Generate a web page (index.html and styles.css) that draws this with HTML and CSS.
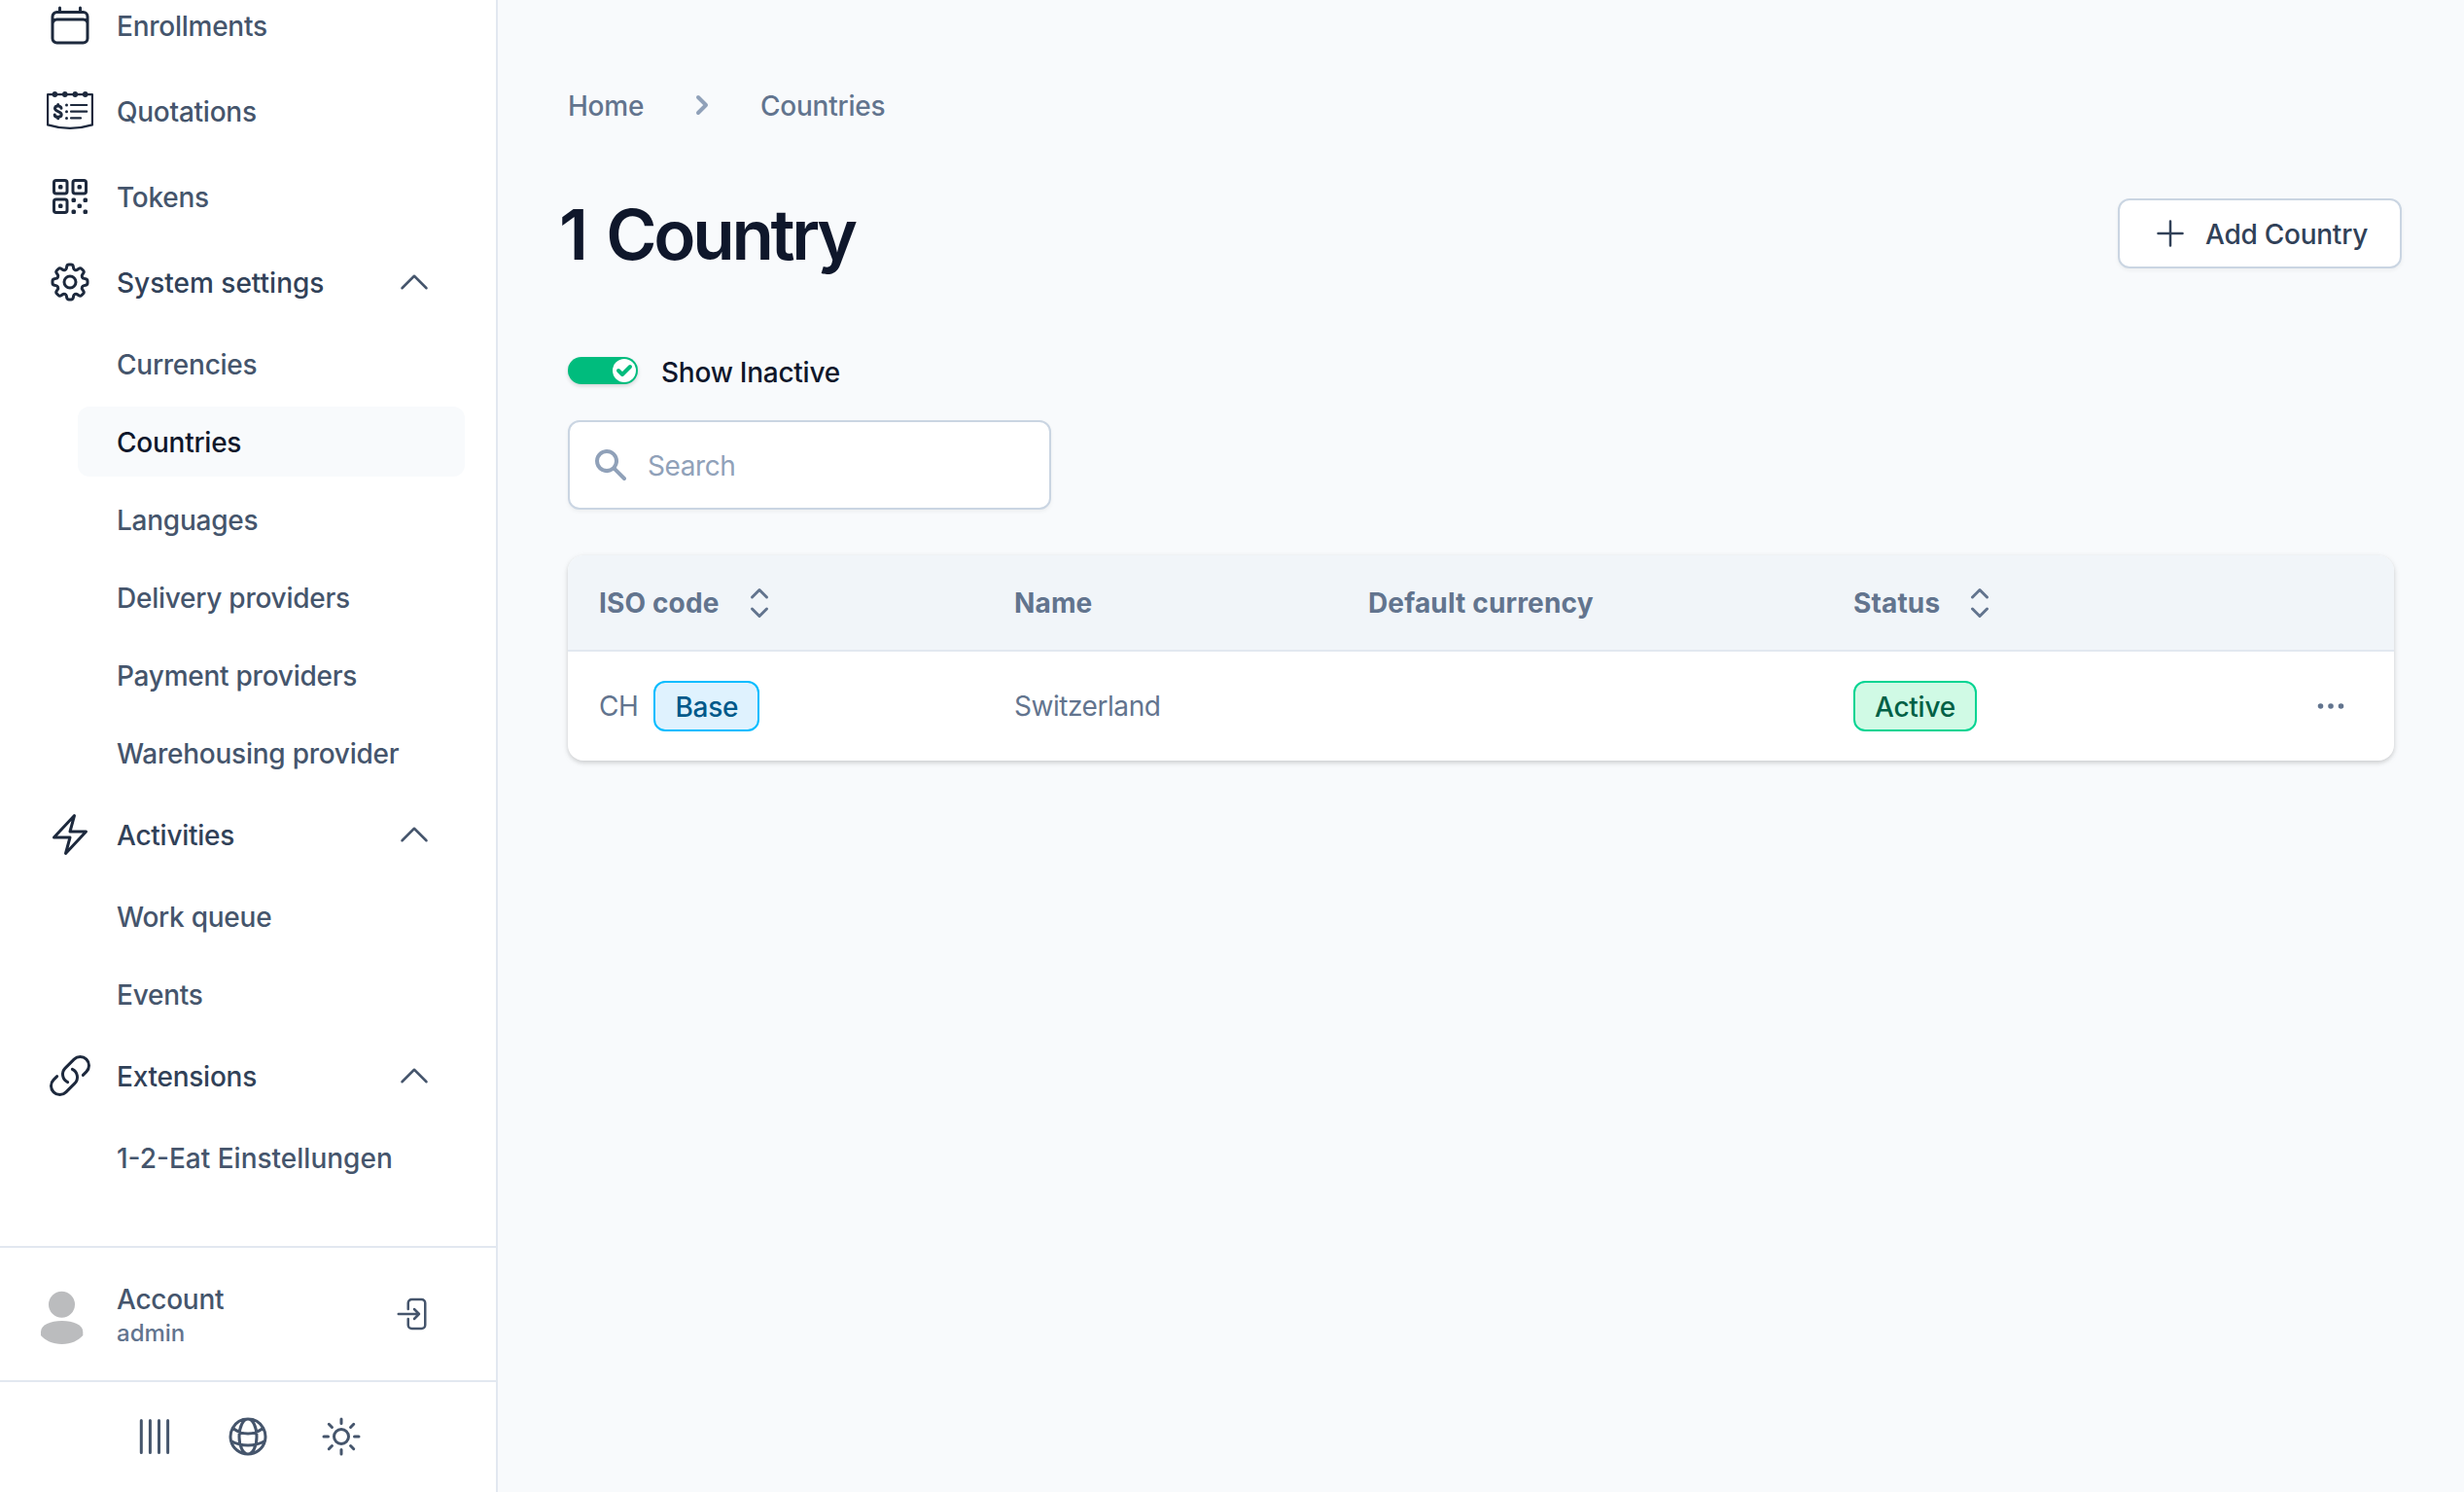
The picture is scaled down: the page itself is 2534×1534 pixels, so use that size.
FILE: index.html
```html
<!DOCTYPE html>
<html lang="en">
<head>
<meta charset="utf-8">
<title>Countries</title>
<link rel="stylesheet" href="styles.css">
</head>
<body>
<svg class="sprite" aria-hidden="true">
  <symbol id="chevron-up" viewBox="0 0 24 24"><path d="m4.5 15.75 7.5-7.5 7.5 7.5"/></symbol>
  <symbol id="sort" viewBox="0 0 24 24"><path d="M8.25 15 12 18.75 15.75 15m-7.5-6L12 5.25 15.75 9"/></symbol>
</svg>
<div class="app">
  <aside class="sidebar">
    <nav class="nav">
      <a class="item"><svg class="icon" viewBox="0 0 24 24"><path d="M6.75 3v2.25M17.25 3v2.25M3 18.75V7.5a2.25 2.25 0 0 1 2.25-2.25h13.5A2.25 2.25 0 0 1 21 7.5v11.25m-18 0A2.25 2.25 0 0 0 5.25 21h13.5A2.25 2.25 0 0 0 21 18.75m-18 0v-7.5A2.25 2.25 0 0 1 5.25 9h13.5A2.25 2.25 0 0 1 21 11.25v7.5"/></svg><span class="label">Enrollments</span></a>
      <a class="item"><svg class="icon icon-note" viewBox="0 0 48 48"><path d="M1.100 7.100h45.800V38.400Q24 45.400 1.100 38.400Z"/><g class="solid"><ellipse cx="8.400" cy="7" rx="2.800" ry="3"/><ellipse cx="18.800" cy="7" rx="2.800" ry="3"/><ellipse cx="29.300" cy="7" rx="2.800" ry="3"/><ellipse cx="39.700" cy="7" rx="2.800" ry="3"/><circle cx="20.500" cy="18" r="1.500"/><circle cx="20.500" cy="24.700" r="1.500"/><circle cx="20.500" cy="31.400" r="1.500"/></g><path d="M25 18h16.200M25 24.700h16.200M25 31.400h10"/><path class="dollar" d="M15 21.300c-.6-3.200-6.500-3.200-6.500.3 0 3.500 6.700 2.400 6.700 6.100 0 3.500-6.700 3.500-7 .3M11.700 17.500v1.200M11.700 30.400v1.300"/></svg><span class="label">Quotations</span></a>
      <a class="item"><svg class="icon" viewBox="0 0 24 24"><path d="M3.75 4.875c0-.621.504-1.125 1.125-1.125h4.5c.621 0 1.125.504 1.125 1.125v4.5c0 .621-.504 1.125-1.125 1.125h-4.5A1.125 1.125 0 0 1 3.75 9.375v-4.5ZM3.75 14.625c0-.621.504-1.125 1.125-1.125h4.5c.621 0 1.125.504 1.125 1.125v4.5c0 .621-.504 1.125-1.125 1.125h-4.5a1.125 1.125 0 0 1-1.125-1.125v-4.5ZM13.5 4.875c0-.621.504-1.125 1.125-1.125h4.5c.621 0 1.125.504 1.125 1.125v4.5c0 .621-.504 1.125-1.125 1.125h-4.5A1.125 1.125 0 0 1 13.5 9.375v-4.5Z"/><path d="M6.75 6.75h.75v.75h-.75v-.75ZM6.75 16.5h.75v.75h-.75v-.75ZM16.5 6.75h.75v.75h-.75v-.75ZM13.5 13.5h.75v.75h-.75v-.75ZM13.5 19.5h.75v.75h-.75v-.75ZM19.5 13.5h.75v.75h-.75v-.75ZM19.5 19.5h.75v.75h-.75v-.75ZM16.5 16.5h.75v.75h-.75v-.75Z"/></svg><span class="label">Tokens</span></a>
      <a class="item parent wide"><svg class="icon" viewBox="0 0 24 24"><path d="M10.343 3.94c.09-.542.56-.94 1.11-.94h1.093c.55 0 1.02.398 1.11.94l.149.894c.07.424.384.764.78.93.398.164.855.142 1.205-.108l.737-.527a1.125 1.125 0 0 1 1.45.12l.773.774c.39.389.44 1.002.12 1.45l-.527.737c-.25.35-.272.806-.107 1.204.165.397.505.71.93.78l.893.15c.543.09.94.559.94 1.109v1.094c0 .55-.397 1.02-.94 1.11l-.894.149c-.424.07-.764.383-.929.78-.165.398-.143.854.107 1.204l.527.738c.32.447.269 1.06-.12 1.45l-.774.773a1.125 1.125 0 0 1-1.449.12l-.738-.527c-.35-.25-.806-.272-1.203-.107-.398.165-.71.505-.781.929l-.149.894c-.09.542-.56.94-1.11.94h-1.094c-.55 0-1.019-.398-1.11-.94l-.148-.894c-.071-.424-.384-.764-.781-.93-.398-.164-.854-.142-1.204.108l-.738.527c-.447.32-1.06.269-1.45-.12l-.773-.774a1.125 1.125 0 0 1-.12-1.45l.527-.737c.25-.35.272-.806.108-1.204-.165-.397-.506-.71-.93-.78l-.894-.15c-.542-.09-.94-.56-.94-1.109v-1.094c0-.55.398-1.02.94-1.11l.894-.149c.424-.07.765-.383.93-.78.165-.398.143-.854-.108-1.204l-.526-.738a1.125 1.125 0 0 1 .12-1.45l.773-.773a1.125 1.125 0 0 1 1.45-.12l.737.527c.35.25.807.272 1.204.107.397-.165.71-.505.78-.929l.15-.894Z"/><path d="M15 12a3 3 0 1 1-6 0 3 3 0 0 1 6 0Z"/></svg><span class="label">System settings</span><svg class="icon chevron"><use href="#chevron-up"/></svg></a>
      <a class="sub">Currencies</a>
      <a class="sub active">Countries</a>
      <a class="sub">Languages</a>
      <a class="sub">Delivery providers</a>
      <a class="sub">Payment providers</a>
      <a class="sub">Warehousing provider</a>
      <a class="item parent"><svg class="icon" viewBox="0 0 24 24"><path d="m3.75 13.5 10.5-11.25L12 10.5h8.25L9.75 21.75 12 13.5H3.75Z"/></svg><span class="label">Activities</span><svg class="icon chevron"><use href="#chevron-up"/></svg></a>
      <a class="sub">Work queue</a>
      <a class="sub">Events</a>
      <a class="item parent"><svg class="icon" viewBox="0 0 24 24"><path d="M13.19 8.688a4.5 4.5 0 0 1 1.242 7.244l-4.5 4.5a4.5 4.5 0 0 1-6.364-6.364l1.757-1.757m13.35-.622 1.757-1.757a4.5 4.5 0 0 0-6.364-6.364l-4.5 4.5a4.5 4.5 0 0 0 1.242 7.244"/></svg><span class="label">Extensions</span><svg class="icon chevron"><use href="#chevron-up"/></svg></a>
      <a class="sub wide">1-2-Eat Einstellungen</a>
    </nav>
    <div class="account">
      <svg class="avatar" viewBox="0 0 48 60"><circle cx="23.5" cy="16.3" r="13.5"/><path d="M2 44.500C2 37 12 33 23.700 33S45.300 37 45.300 44.500V48C41 53 33 57 23.700 57S6 53 2 48Z"/></svg>
      <div class="who"><span class="name">Account</span><span class="role">admin</span></div>
      <svg class="icon logout" viewBox="0 0 24 24"><path d="M8.250 9V5.250A2.250 2.250 0 0 1 10.500 3h6a2.250 2.250 0 0 1 2.250 2.250v13.500A2.250 2.250 0 0 1 16.500 21h-6a2.250 2.250 0 0 1-2.250-2.250V15M12 9l3 3m0 0-3 3m3-3H2.250"/></svg>
    </div>
    <div class="tools">
      <svg class="icon icon-bars" viewBox="0 0 48 48"><path d="M10.300 7.500v33M19.400 7.500v33M28.500 7.500v33M37.600 7.500v33"/></svg>
      <svg class="icon" viewBox="0 0 24 24"><path d="M12 21a9.004 9.004 0 0 0 8.716-6.747M12 21a9.004 9.004 0 0 1-8.716-6.747M12 21c2.485 0 4.500-4.030 4.500-9S14.485 3 12 3m0 18c-2.485 0-4.500-4.030-4.500-9S9.515 3 12 3m0 0a8.997 8.997 0 0 1 7.843 4.582M12 3a8.997 8.997 0 0 0-7.843 4.582m15.686 0A11.953 11.953 0 0 1 12 10.500c-2.998 0-5.740-1.100-7.843-2.918m15.686 0A8.959 8.959 0 0 1 21 12c0 .778-.099 1.533-.284 2.253m0 0A17.919 17.919 0 0 1 12 16.500c-3.162 0-6.133-.815-8.716-2.247m0 0A9.015 9.015 0 0 1 3 12c0-1.605.42-3.113 1.157-4.418"/></svg>
      <svg class="icon" viewBox="0 0 24 24"><path d="M12 3v2.250m6.364.386-1.591 1.591M21 12h-2.250m-.386 6.364-1.591-1.591M12 18.750V21m-4.773-4.227-1.591 1.591M5.250 12H3m4.227-4.773L5.636 5.636M15.750 12a3.750 3.750 0 1 1-7.500 0 3.750 3.750 0 0 1 7.500 0Z"/></svg>
    </div>
  </aside>
  <main class="main">
    <div class="crumbs">
      <a>Home</a>
      <svg class="crumb-sep" viewBox="0 0 20 20"><path d="M7.293 14.707a1 1 0 010-1.414L10.586 10 7.293 6.707a1 1 0 011.414-1.414l4 4a1 1 0 010 1.414l-4 4a1 1 0 01-1.414 0z"/></svg>
      <a>Countries</a>
    </div>
    <header class="head">
      <h1 class="title">1 Country</h1>
      <button class="add"><svg class="icon" viewBox="0 0 24 24"><path d="M12 4.500v15m7.500-7.500h-15"/></svg><span>Add Country</span></button>
    </header>
    <div class="toggle-row">
      <span class="toggle"><span class="knob"><svg viewBox="0 0 12 12"><path d="M3.707 5.293a1 1 0 00-1.414 1.414l1.414-1.414zM5 8l-.707.707a1 1 0 001.414 0L5 8zm4.707-3.293a1 1 0 00-1.414-1.414l1.414 1.414zm-7.414 2l2 2 1.414-1.414-2-2-1.414 1.414zm3.414 2l4-4-1.414-1.414-4 4 1.414 1.414z"/></svg></span></span>
      <span>Show Inactive</span>
    </div>
    <div class="search">
      <svg viewBox="0 0 20 20"><path fill-rule="evenodd" d="M8 4a4 4 0 100 8 4 4 0 000-8zM2 8a6 6 0 1110.890 3.476l4.817 4.817a1 1 0 01-1.414 1.414l-4.816-4.816A6 6 0 012 8z"/></svg>
      <span>Search</span>
    </div>
    <section class="table">
      <div class="row thead">
        <div class="cell">ISO code<svg class="icon"><use href="#sort"/></svg></div>
        <div class="cell">Name</div>
        <div class="cell">Default currency</div>
        <div class="cell">Status<svg class="icon"><use href="#sort"/></svg></div>
      </div>
      <div class="row">
        <div class="cell">CH<span class="badge base">Base</span></div>
        <div class="cell">Switzerland</div>
        <div class="cell"></div>
        <div class="cell"><span class="badge ok">Active</span></div>
        <div class="cell more"><svg class="icon" viewBox="0 0 24 24"><path class="solid" d="M7.400 12a.65.65 0 1 1-1.300 0 .65.65 0 0 1 1.300 0ZM12.650 12a.65.65 0 1 1-1.300 0 .65.65 0 0 1 1.300 0ZM17.900 12a.65.65 0 1 1-1.300 0 .65.65 0 0 1 1.300 0Z"/></svg></div>
      </div>
    </section>
  </main>
</div>
</body>
</html>
```
FILE: styles.css
```css
* { box-sizing: border-box; }

body {
  margin: 0;
  font: 400 28px/40px Inter, "Liberation Sans", sans-serif;
  letter-spacing: -0.25px;
  color: #0f172b;
  background: #f8fafc;
}

.sprite { display: none; }

.app {
  display: flex;
  height: 1534px;
  overflow: hidden;
}

.icon {
  flex: none;
  width: 48px;
  height: 48px;
  fill: none;
  stroke: currentColor;
  stroke-width: 1.5;
  stroke-linecap: round;
  stroke-linejoin: round;
}
.icon .solid { fill: currentColor; }
.icon g.solid { stroke: none; }
.icon-note { stroke-width: 2.2; }
.icon-note .dollar { stroke-width: 3; }
.icon-bars { stroke-width: 3; }

/* Sidebar */
.sidebar {
  flex: none;
  display: flex;
  flex-direction: column;
  width: 512px;
  background: #fff;
  border-right: 2px solid #e2e8f0;
  font-weight: 500;
  color: #45556c;
}

.nav {
  flex: 1;
  min-height: 0;
  display: flex;
  flex-direction: column;
  gap: 8px;
  margin-top: -14px;
  padding: 0 32px;
}

.item {
  flex: none;
  display: flex;
  align-items: center;
  gap: 24px;
  height: 80px;
  padding: 0 32px 0 16px;
}
.item .icon { color: #1d293d; }
.item .label { flex: 1; padding-top: 2px; }
.parent { color: #314158; }
.item .chevron { width: 40px; height: 40px; color: #45556c; }

.sub {
  flex: none;
  height: 72px;
  margin-left: 48px;
  padding: 17px 40px 15px;
  border-radius: 12px;
}
.active { background: #f8fafc; color: #0f172b; }
.wide { letter-spacing: 0; }

.account {
  flex: none;
  display: flex;
  align-items: center;
  height: 138px;
  padding: 0 64px 0 40px;
  border-top: 2px solid #e2e8f0;
}
.avatar { width: 48px; height: 60px; margin-top: 8px; fill: #bbbcbe; }
.who {
  flex: 1;
  display: flex;
  flex-direction: column;
  padding: 2px 0 0 32px;
}
.name { line-height: 38px; }
.role { font-size: 24px; line-height: 32px; letter-spacing: 0; color: #62748e; }
.logout { width: 40px; height: 40px; }

.tools {
  flex: none;
  display: flex;
  justify-content: center;
  gap: 48px;
  height: 115px;
  padding-top: 32px;
  border-top: 2px solid #e2e8f0;
}

/* Main */
.main {
  flex: 1;
  padding: 88px 64px 0 72px;
}

.crumbs {
  display: flex;
  align-items: center;
  height: 40px;
  gap: 40px;
  font-weight: 500;
  color: #62748e;
}
.crumbs a { padding-top: 2px; }
.crumb-sep { width: 40px; height: 40px; fill: #90a1b9; }

.head {
  display: flex;
  align-items: center;
  justify-content: space-between;
  height: 80px;
  margin-top: 72px;
}
.title {
  margin: 1px 0 0 -9px;
  font-size: 71px;
  line-height: 80px;
  font-weight: 600;
  letter-spacing: -3.3px;
  word-spacing: 7px;
}
.add {
  display: flex;
  align-items: center;
  gap: 16px;
  width: 292px;
  height: 72px;
  padding: 0 0 0 32px;
  border: 2px solid #cad5e2;
  border-radius: 12px;
  background: #fff;
  box-shadow: 0 2px 4px rgba(0, 0, 0, .05);
  font: inherit;
  font-weight: 500;
  letter-spacing: inherit;
  white-space: nowrap;
  color: #314158;
}
.add .icon { width: 40px; height: 40px; }
.add span { padding-top: 2px; }

.toggle-row {
  display: flex;
  align-items: center;
  gap: 24px;
  height: 40px;
  margin-top: 83px;
  font-weight: 500;
}
.toggle {
  display: flex;
  justify-content: flex-end;
  width: 72px;
  height: 28px;
  padding: 2px;
  margin-top: -4px;
  border-radius: 14px;
  background: #00bc7d;
  box-shadow: 0 2px 4px rgba(0, 0, 0, .15);
}
.knob { width: 24px; height: 24px; border-radius: 50%; background: #fff; }
.knob svg { display: block; width: 24px; height: 24px; fill: #00bc7d; }

.search {
  display: flex;
  align-items: center;
  gap: 18px;
  width: 497px;
  height: 92px;
  margin-top: 29px;
  padding-left: 22px;
  border: 2px solid #cad5e2;
  border-radius: 12px;
  background: #fff;
  box-shadow: 0 2px 4px rgba(0, 0, 0, .05);
  letter-spacing: -0.4px;
  color: #90a1b9;
}
.search svg { width: 40px; height: 40px; fill: #90a1b9; }
.search span { padding-top: 2px; }

.table {
  width: 1878px;
  margin-top: 47px;
  overflow: hidden;
  border-radius: 16px;
  background: #fff;
  box-shadow: 0 2px 6px rgba(0, 0, 0, .1), 0 2px 4px rgba(0, 0, 0, .1);
  letter-spacing: -0.45px;
  color: #62748e;
}
.row {
  display: grid;
  grid-template-columns: 427px 364px 499px 1fr auto;
  align-items: center;
  height: 112px;
  padding-left: 32px;
}
.thead {
  height: 99px;
  background: #f1f5f9;
  border-bottom: 2px solid #e2e8f0;
  font-weight: 700;
  letter-spacing: 0.15px;
}
.cell { display: flex; align-items: center; }
.thead .icon { margin-left: 17px; }
.badge {
  height: 52px;
  padding: 0 20px;
  border: 2px solid;
  border-radius: 12px;
  line-height: 50px;
  font-weight: 500;
  letter-spacing: -0.25px;
}
.base { margin-left: 16px; border-color: #00bcff; background: #dff2fe; color: #00598a; }
.ok { border-color: #00d492; background: #d0fae5; color: #006045; }
.more { padding-right: 41px; }
```
